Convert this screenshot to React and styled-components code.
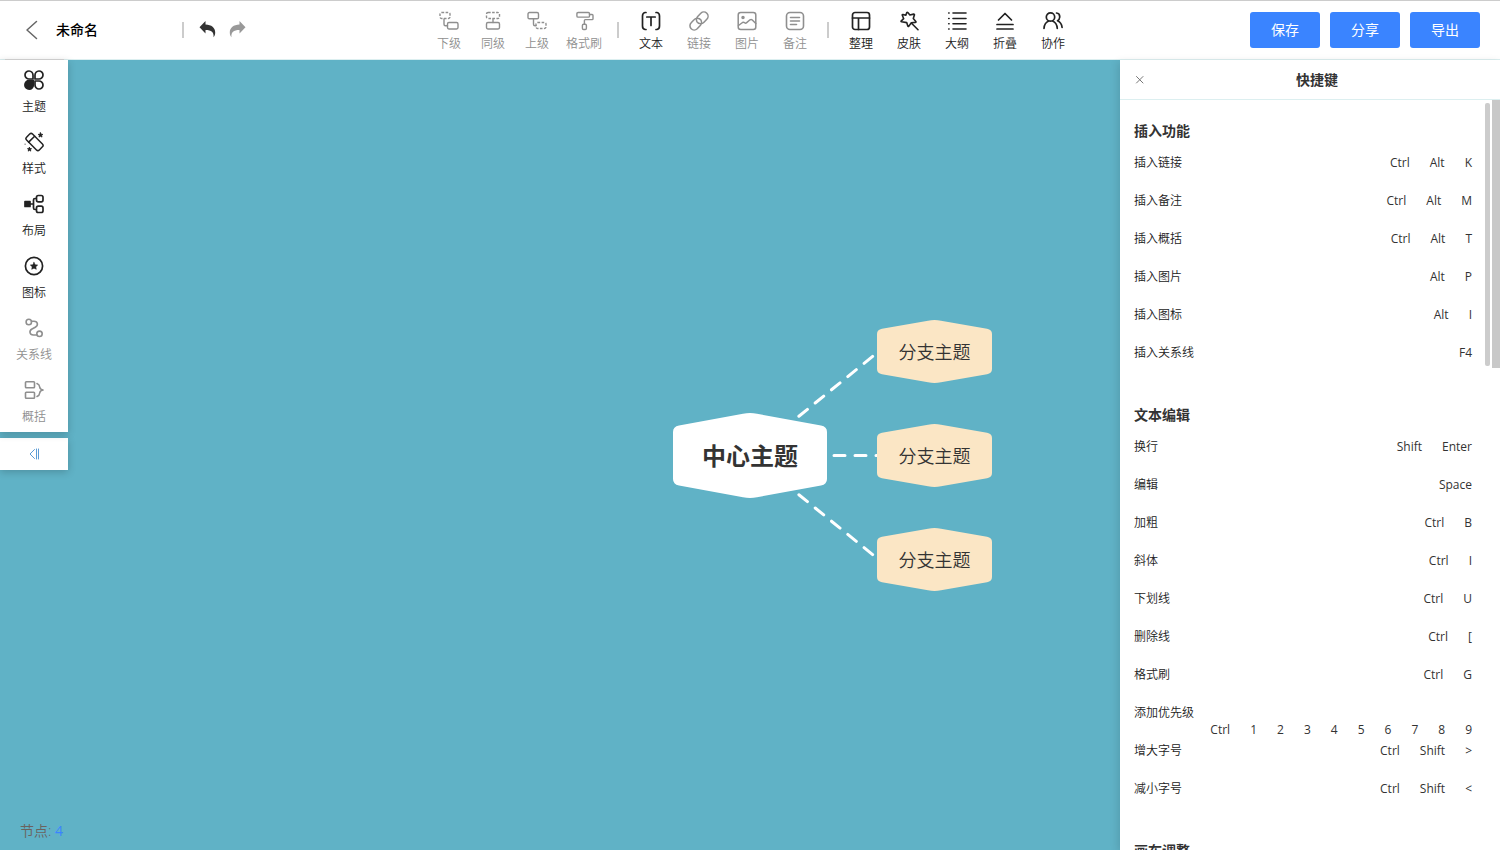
import React from "react";
import styled, { createGlobalStyle } from "styled-components";

const GlobalStyle = createGlobalStyle`
  *, *::before, *::after { box-sizing: border-box; }
  body {
    margin: 0;
    font-family: "Open Sans", "Noto Sans CJK SC", sans-serif;
    font-size: 12px;
    color: #333;
    background: #fff;
  }
  button {
    font: inherit;
    color: inherit;
    background: none;
    border: 0;
    padding: 0;
    cursor: pointer;
  }
  h1, h2, h3, dl, dd, dt, p { margin: 0; }
  svg { display: block; }
`;

const Page = styled.div`
  display: flex;
  flex-direction: column;
  height: 100vh;
  overflow: hidden;
`;

/* ---------- header ---------- */

const Header = styled.header`
  display: grid;
  grid-template-columns: 1fr auto 1fr;
  align-items: center;
  height: 60px;
  flex: none;
  padding: 0 20px 0 24px;
  border-top: 1px solid #ccc;
  border-bottom: 1px solid #dceff0;
`;

const DocumentArea = styled.div`
  display: flex;
  align-items: center;
`;

const BackButton = styled.button`
  color: #666;
`;

const DocumentTitle = styled.h1`
  width: 118px;
  margin-left: 16px;
  font-size: 14px;
  font-weight: 500;
  line-height: 20px;
  color: #000;
`;

const Divider = styled.span`
  width: 2px;
  height: 16px;
  margin: 0 8px;
  background: #ccc;
`;

const HistoryButton = styled.button`
  margin-left: ${(p) => (p.$first ? 6 : 9)}px;
  color: ${(p) => (p.disabled ? "#999" : "#333")};
`;

const Toolbar = styled.nav`
  display: flex;
  align-items: center;
`;

const ToolButton = styled.button`
  display: flex;
  flex-direction: column;
  align-items: center;
  gap: 5px;
  width: ${(p) => p.$width}px;
  padding-top: 2px;
  font-weight: 350;
  line-height: 16px;
  color: ${(p) => (p.disabled ? "#8f8f8f" : "#222")};
`;

const Actions = styled.div`
  display: flex;
  justify-content: flex-end;
  gap: 10px;
`;

const ActionButton = styled.button`
  width: 70px;
  height: 36px;
  padding-bottom: 2px;
  border-radius: 3px;
  font-size: 14px;
  color: #fff;
  background: #3a84ff;
`;

/* ---------- canvas ---------- */

const Main = styled.main`
  display: flex;
  flex: 1;
  min-height: 0;
`;

const Canvas = styled.section`
  position: relative;
  display: flex;
  flex-direction: column;
  align-items: flex-start;
  flex: 1;
  min-width: 0;
  background: #60b2c6;
`;

const SideMenu = styled.nav`
  position: relative;
  width: 68px;
  background: #fff;
  box-shadow: 0 2px 8px rgba(0, 0, 0, 0.2);

  &::before {
    content: "";
    position: absolute;
    top: -1px;
    left: 5px;
    right: 4px;
    height: 1px;
    background: #ccc;
  }
`;

const SideButton = styled.button`
  display: flex;
  flex-direction: column;
  align-items: center;
  gap: 9px;
  width: 100%;
  height: 62px;
  padding-top: 10px;
  font-weight: 350;
  line-height: 16px;
  color: ${(p) => (p.disabled ? "#8f8f8f" : "#222")};
`;

const CollapseButton = styled.button`
  display: flex;
  align-items: center;
  justify-content: center;
  width: 68px;
  height: 32px;
  margin-top: 6px;
  padding-left: 2px;
  color: #5b9bd5;
  background: #fff;
  box-shadow: 0 2px 8px rgba(0, 0, 0, 0.2);
`;

const NodeCount = styled.p`
  margin-top: auto;
  padding: 0 20px 9px;
  font-size: 14px;
  font-weight: 350;
  line-height: 20px;
  color: #6b625e;

  b {
    font-weight: 400;
    color: #3a84ff;
  }
`;

const MindMap = styled.div`
  position: absolute;
  left: 50vw;
  top: 50%;
`;

const Links = styled.svg`
  position: absolute;
  left: 0;
  top: -110px;
`;

const Topic = styled.div`
  position: absolute;
  left: ${(p) => p.$x}px;
  top: ${(p) => p.$y}px;
  display: grid;
  place-items: center;
  width: ${(p) => (p.$root ? 154 : 115)}px;
  height: ${(p) => (p.$root ? 85 : 63)}px;
  font-size: ${(p) => (p.$root ? 24 : 18)}px;
  font-weight: ${(p) => (p.$root ? 700 : 350)};
  line-height: 1;

  > * { grid-area: 1 / 1; }
`;

const TopicText = styled.span`
  position: relative;
`;

/* ---------- shortcuts panel ---------- */

const Panel = styled.aside`
  position: relative;
  display: flex;
  flex-direction: column;
  flex: none;
  width: 380px;
  background: #fff;
  box-shadow: -2px 2px 8px rgba(0, 0, 0, 0.12);
`;

const PanelHeader = styled.header`
  display: flex;
  align-items: center;
  flex: none;
  height: 40px;
  padding-left: 14px;
  border-bottom: 1px solid #dceff0;
`;

const CloseButton = styled.button`
  color: #777;
`;

const PanelTitle = styled.h2`
  flex: 1;
  padding-right: 12px;
  font-size: 14px;
  font-weight: 700;
  line-height: 20px;
  text-align: center;
`;

const PanelBody = styled.div`
  display: flex;
  flex: 1;
  min-height: 0;
  overflow: hidden;
`;

const Shortcuts = styled.div`
  flex: 1;
  padding: 21px 13px 0 14px;
`;

const Group = styled.section`
  & + & { margin-top: 34px; }
`;

const GroupTitle = styled.h3`
  margin-bottom: 2px;
  font-size: 14px;
  font-weight: 700;
  line-height: 20px;
`;

const ShortcutRow = styled.div`
  display: flex;
  flex-wrap: wrap;
  justify-content: space-between;
  align-content: flex-start;
  height: 38px;
  padding-top: 11px;
  line-height: 17px;
`;

const ShortcutName = styled.dt`
  font-weight: 350;
  color: #222;
`;

const Keys = styled.dd`
  display: flex;
  margin-left: auto;
`;

const Key = styled.kbd`
  margin-left: 20px;
  font-family: inherit;
`;

const InnerThumb = styled.div`
  width: 5px;
  height: 263px;
  margin: 3px 2px 0 0;
  border-radius: 2px;
  background: #ccc;
`;

const OuterThumb = styled.div`
  width: 8px;
  height: 268px;
  background: #c8c8c8;
`;

/* ---------- icons ---------- */

const Icon = ({ children, box = "0 0 20 20", w = 20, h = 20, sw = 1.6 }) => (
  <svg
    width={w}
    height={h}
    viewBox={box}
    fill="none"
    stroke="currentColor"
    strokeWidth={sw}
    strokeLinecap="round"
    strokeLinejoin="round"
    aria-hidden="true"
  >
    {children}
  </svg>
);

const dash = { strokeDasharray: "2.6 1.4", strokeLinecap: "butt" };

const icons = {
  child: (
    <Icon sw={1.4}>
      <rect x="1" y="1.5" width="10" height="6" rx="1.6" {...dash} />
      <rect x="8.5" y="11.5" width="10.5" height="6.5" rx="1.4" />
      <path d="M5 8v5.2q0 1.5 1.5 1.5h2" />
    </Icon>
  ),
  sibling: (
    <Icon sw={1.4}>
      <rect x="3.5" y="1.5" width="13" height="6" rx="1.6" {...dash} />
      <rect x="3.5" y="11.5" width="13" height="6.5" rx="1.4" />
      <path d="M10 8v3.5" />
    </Icon>
  ),
  parent: (
    <Icon sw={1.4}>
      <rect x="1" y="1.5" width="10.5" height="6.3" rx="1.4" />
      <rect x="9" y="11.5" width="10" height="6" rx="1.6" {...dash} />
      <path d="M6.5 7.8v5.4q0 1.5 1.5 1.5h1" />
    </Icon>
  ),
  painter: (
    <Icon sw={1.4}>
      <rect x="2.9" y="1.5" width="12.6" height="4.6" rx="1.2" />
      <path d="M15.5 3.5h2.6q.9 0 .9.9v3.3q0 .9-.9.9h-6.8q-.9 0-.9.9v3.6" />
      <rect x="8.4" y="13.2" width="4" height="5.3" rx="1.2" />
    </Icon>
  ),
  text: (
    <Icon sw={1.7}>
      <path d="M5 1.5H4Q1.5 2 1.5 5v10q0 3 2.5 3.5h1M15 1.5h1q2.5.5 2.5 3.5v10q0 3-2.5 3.5h-1M5.800 6h8.400M10 6v8.500" />
    </Icon>
  ),
  link: (
    <Icon box="1.5 1.5 21 21">
      <path d="M10 13a4.600 4.600 0 0 0 7.200.3l3-3.200a4.300 4.300 0 0 0-6.300-6.300l-3.500 3.700a4.600 4.600 0 0 0-.8 4.800" />
      <path d="M14 11a4.600 4.600 0 0 0-7.200-.3l-3 3.200a4.300 4.300 0 0 0 6.300 6.300l3.500-3.700a4.600 4.600 0 0 0 .8-4.800" />
    </Icon>
  ),
  image: (
    <Icon sw={1.5}>
      <rect x="1.200" y="1.500" width="17.600" height="17" rx="2.500" />
      <circle cx="6" cy="6.500" r="1" fill="currentColor" />
      <path d="M1.500 14.500 5.500 11.500q1.200-.6 2.200.3.900.8 2-.2l3.300-2.800q1.200-.8 2.300.2l3.500 3.500" />
    </Icon>
  ),
  note: (
    <Icon>
      <rect x="1.500" y="1.500" width="17" height="17" rx="3.500" />
      <path d="M5.500 6.500h9M5.500 10h9M5.500 13.500h6" />
    </Icon>
  ),
  arrange: (
    <Icon sw={1.7}>
      <rect x="1.500" y="1.500" width="17" height="17" rx="2.500" />
      <path d="M1.500 7h17M7.500 7v11.500" />
    </Icon>
  ),
  skin: (
    <Icon>
      <path d="M7.800 1.500q.5-.6 1 0L10.900 4l3.700-.9q1-.1.800.9l-1.100 3.500 2.500 2.900q.5.900-.5 1l-4 .3-2.400 3.400q-.7.700-1.100-.2l-1.100-3.300-5.100-.8q-.9-.3-.3-.9l2.400-2.200-1.400-3.400q-.2-.9.700-.8l2.800.7ZM12.800 12.500l6.200 6.200" />
    </Icon>
  ),
  outline: (
    <Icon>
      <path d="M6 2h13M6 7.500h13M6 12.800h13M6 18h13M1.700 2h.4M1.700 7.500h.4M1.700 12.800h.4M1.700 18h.4" />
    </Icon>
  ),
  fold: (
    <Icon sw={1.7}>
      <path d="M3.500 9 10 2.500 16.500 9M2 13.500h16M2 18h16" />
    </Icon>
  ),
  team: (
    <Icon sw={1.7}>
      <circle cx="7.500" cy="6" r="4.200" />
      <path d="M1 17.500q.4-6 4.800-7.500M9.500 10q4.300 1.500 4.800 7.500M13.500 2q3.500.4 3.200 4.200-.2 2.300-2.100 3.500 4 1.800 4.500 6.800" />
    </Icon>
  ),
  theme: (
    <Icon sw={1.7}>
      <path d="M9 9H5.200A4 4 0 1 1 9 5.200ZM11 9V5.200A4 4 0 1 1 14.800 9ZM11 11h3.800A4 4 0 1 1 11 14.800Z" />
      <path d="M9.300 10.700v4.100a4.200 4.200 0 1 1-4.200-4.100Z" fill="currentColor" />
    </Icon>
  ),
  style: (
    <Icon sw={1.5}>
      <g transform="translate(10.500 10) rotate(45)">
        <rect x="-9" y="-4.200" width="18" height="8.400" rx="2" />
        <path d="M-4-4.200v8.400" />
      </g>
      <path
        d="m16.500.8.7 1.500 1.600.1-1.200 1.100.4 1.600-1.500-.9-1.500.9.4-1.600-1.200-1.100 1.600-.1ZM5.500 15.400l.6 1.200 1.400.1-1.100 1 .4 1.400-1.300-.8-1.300.8.4-1.400-1.100-1 1.400-.1ZM1 12.200h.2"
        fill="currentColor"
        strokeWidth=".9"
      />
    </Icon>
  ),
  layout: (
    <Icon sw={1.7}>
      <rect x="1" y="7.500" width="5" height="5" fill="currentColor" />
      <path d="M6 10h3.500M12 4.500h-1q-1.500 0-1.500 1.500v8q0 1.500 1.500 1.500h1" />
      <rect x="12.500" y="1.500" width="6.500" height="6.300" rx="1.800" />
      <rect x="12.500" y="12.200" width="6.500" height="6.300" rx="1.800" />
    </Icon>
  ),
  badge: (
    <Icon sw={1.7}>
      <circle cx="10" cy="10" r="8.600" />
      <path
        d="m10 6.300 1.150 2.350 2.550.35-1.850 1.800.45 2.550L10 12.150l-2.300 1.200.45-2.550L6.300 9l2.550-.35Z"
        fill="currentColor"
        strokeWidth=".5"
      />
    </Icon>
  ),
  relation: (
    <Icon>
      <circle cx="4.800" cy="4" r="2.700" />
      <circle cx="15.500" cy="15.800" r="2.700" />
      <path d="M7.500 3.300h2.500c4 0 4.500 4.200 1.300 5.900L8 11c-3.200 1.700-2.500 6 1.300 6h3.500" />
    </Icon>
  ),
  summary: (
    <Icon>
      <rect x="1.500" y="1.700" width="9" height="6" rx=".8" />
      <rect x="1.500" y="12.300" width="9" height="6" rx=".8" />
      <path d="M13 3.500q2.500 1 2.700 3.500.3 2.500 3.300 3-3 .5-3.300 3-.2 2.500-2.700 3.500" />
    </Icon>
  ),
};

const BackIcon = () => (
  <Icon box="0 0 16 20" w={16} sw={1.5}>
    <path d="M12.500 1.500 3 10l9.500 8.500" />
  </Icon>
);

const HistoryIcon = ({ flip }) => (
  <svg width="20" height="20" viewBox="0 0 20 20" aria-hidden="true">
    <path
      d="M7.500 1v3.500c6 .2 9.700 3.200 9.700 8 0 2-.6 3.500-1.700 4.700.6-5-2-7.200-8-7.200v3.500L1.500 7.200Z"
      fill="currentColor"
      transform={flip ? "translate(20 0) scale(-1 1)" : undefined}
    />
  </svg>
);

/* ---------- data ---------- */

const toolGroups = [
  [
    ["下级", "child", 44, true],
    ["同级", "sibling", 44, true],
    ["上级", "parent", 44, true],
    ["格式刷", "painter", 50, true],
  ],
  [
    ["文本", "text", 48, false],
    ["链接", "link", 48, true],
    ["图片", "image", 48, true],
    ["备注", "note", 48, true],
  ],
  [
    ["整理", "arrange", 48, false],
    ["皮肤", "skin", 48, false],
    ["大纲", "outline", 48, false],
    ["折叠", "fold", 48, false],
    ["协作", "team", 48, false],
  ],
];

const sideItems = [
  ["主题", "theme", false],
  ["样式", "style", false],
  ["布局", "layout", false],
  ["图标", "badge", false],
  ["关系线", "relation", true],
  ["概括", "summary", true],
];

const shortcutGroups = [
  {
    title: "插入功能",
    rows: [
      ["插入链接", "Ctrl", "Alt", "K"],
      ["插入备注", "Ctrl", "Alt", "M"],
      ["插入概括", "Ctrl", "Alt", "T"],
      ["插入图片", "Alt", "P"],
      ["插入图标", "Alt", "I"],
      ["插入关系线", "F4"],
    ],
  },
  {
    title: "文本编辑",
    rows: [
      ["换行", "Shift", "Enter"],
      ["编辑", "Space"],
      ["加粗", "Ctrl", "B"],
      ["斜体", "Ctrl", "I"],
      ["下划线", "Ctrl", "U"],
      ["删除线", "Ctrl", "["],
      ["格式刷", "Ctrl", "G"],
      ["添加优先级", "Ctrl", "1", "2", "3", "4", "5", "6", "7", "8", "9"],
      ["增大字号", "Ctrl", "Shift", ">"],
      ["减小字号", "Ctrl", "Shift", "<"],
    ],
  },
  { title: "画布调整", rows: [] },
];

const RootShape = () => (
  <svg width="154" height="85" viewBox="0 0 154 85" aria-hidden="true">
    <path
      d="M70 .8Q77-.6 84 .8L148 12.500Q154 13.600 154 19V66Q154 71.400 148 72.500L84 84.200Q77 85.600 70 84.200L6 72.500Q0 71.400 0 66V19Q0 13.600 6 12.500Z"
      fill="#fff"
    />
  </svg>
);

const BranchShape = () => (
  <svg width="115" height="63" viewBox="0 0 115 63" aria-hidden="true">
    <path
      d="M51 .8Q57.500-.6 64 .8L110 8.800Q115 9.800 115 14V49Q115 53.200 110 54.200L64 62.200Q57.500 63.600 51 62.200L5 54.200Q0 53.200 0 49V14Q0 9.800 5 8.800Z"
      fill="#fbe6c5"
    />
  </svg>
);

export default function App() {
  return (
    <Page>
      <GlobalStyle />
      <Header>
        <DocumentArea>
          <BackButton type="button" aria-label="返回">
            <BackIcon />
          </BackButton>
          <DocumentTitle>未命名</DocumentTitle>
          <Divider />
          <HistoryButton type="button" aria-label="撤销" $first>
            <HistoryIcon />
          </HistoryButton>
          <HistoryButton type="button" aria-label="重做" disabled>
            <HistoryIcon flip />
          </HistoryButton>
        </DocumentArea>
        <Toolbar>
          {toolGroups.map((group, i) => (
            <React.Fragment key={i}>
              {i > 0 && <Divider />}
              {group.map(([label, icon, width, disabled]) => (
                <ToolButton key={label} type="button" $width={width} disabled={disabled}>
                  {icons[icon]}
                  {label}
                </ToolButton>
              ))}
            </React.Fragment>
          ))}
        </Toolbar>
        <Actions>
          <ActionButton type="button">保存</ActionButton>
          <ActionButton type="button">分享</ActionButton>
          <ActionButton type="button">导出</ActionButton>
        </Actions>
      </Header>
      <Main>
        <Canvas>
          <MindMap>
            <Links width="140" height="220" viewBox="0 -110 140 220" aria-hidden="true">
              <g stroke="#fff" strokeWidth="3" strokeLinecap="round" strokeDasharray="11 10">
                <path d="M0 1 128-103" />
                <path d="M0 .5H130" />
                <path d="M0 0 128 104" />
              </g>
            </Links>
            <Topic $root $x={-77} $y={-42}>
              <RootShape />
              <TopicText>中心主题</TopicText>
            </Topic>
            {[-135, -31, 73].map((y) => (
              <Topic key={y} $x={127} $y={y}>
                <BranchShape />
                <TopicText>分支主题</TopicText>
              </Topic>
            ))}
          </MindMap>
          <SideMenu>
            {sideItems.map(([label, icon, disabled]) => (
              <SideButton key={label} type="button" disabled={disabled}>
                {icons[icon]}
                {label}
              </SideButton>
            ))}
          </SideMenu>
          <CollapseButton type="button" aria-label="收起">
            <Icon box="0 0 12 12" w={12} h={12} sw={1}>
              <path d="M5.500 1.500 1 6l4.500 4.500M7.500 1v10M9.500 1v10" />
            </Icon>
          </CollapseButton>
          <NodeCount>
            节点: <b>4</b>
          </NodeCount>
        </Canvas>
        <Panel>
          <PanelHeader>
            <CloseButton type="button" aria-label="关闭">
              <Icon box="0 0 12 12" w={12} h={12} sw={1}>
                <path d="m2.500 2.500 6.500 6.500M9 2.500 2.500 9" />
              </Icon>
            </CloseButton>
            <PanelTitle>快捷键</PanelTitle>
          </PanelHeader>
          <PanelBody>
            <Shortcuts>
              {shortcutGroups.map((group) => (
                <Group key={group.title}>
                  <GroupTitle>{group.title}</GroupTitle>
                  <dl>
                    {group.rows.map(([name, ...keys]) => (
                      <ShortcutRow key={name}>
                        <ShortcutName>{name}</ShortcutName>
                        <Keys>
                          {keys.map((key) => (
                            <Key key={key}>{key}</Key>
                          ))}
                        </Keys>
                      </ShortcutRow>
                    ))}
                  </dl>
                </Group>
              ))}
            </Shortcuts>
            <InnerThumb />
            <OuterThumb />
          </PanelBody>
        </Panel>
      </Main>
    </Page>
  );
}
